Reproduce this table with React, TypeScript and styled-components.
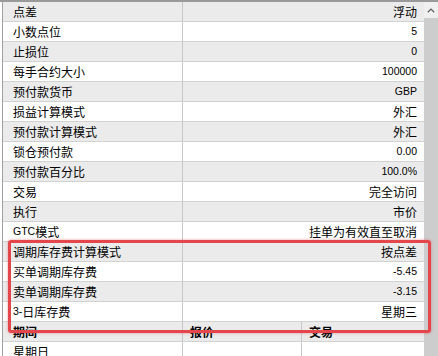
import styled, { createGlobalStyle } from "styled-components";

const GlobalStyle = createGlobalStyle`
  html, body {
    margin: 0;
    padding: 0;
    background: #ffffff;
  }
  body {
    font-family: "Noto Sans CJK SC", "Liberation Sans", sans-serif;
    font-size: 12px;
    color: #000000;
  }
`;

const Window = styled.div`
  position: relative;
  width: 438px;
  height: 356px;
  overflow: hidden;
  display: flex;
  border-top: 2px solid #9a9a9a;
  box-sizing: border-box;
  background: #ffffff;
`;

const Grid = styled.div`
  flex: 1;
  margin-left: 2px;
  border-left: 1px solid #a0a0a0;
  display: flex;
  flex-direction: column;
`;

const Row = styled.div<{ $shaded?: boolean }>`
  display: grid;
  grid-template-columns: 180px 1fr;
  height: 20px;
  box-sizing: border-box;
  border-bottom: 1px solid #d2d2d2;
  background: ${(p) => (p.$shaded ? "#ebebeb" : "#ffffff")};
  flex-shrink: 0;
`;

const NameCell = styled.div`
  display: flex;
  align-items: center;
  padding-left: 10px;
  border-right: 1px solid #c8c8c8;
  white-space: nowrap;
  line-height: 19px;
`;

const ValueCell = styled.div`
  display: flex;
  align-items: center;
  justify-content: flex-end;
  padding-right: 7px;
  white-space: nowrap;
  line-height: 19px;
`;

const Latin = styled.span`
  font-family: "Liberation Sans", sans-serif;
  font-size: 10.5px;
`;

const HeadRow = styled.div<{ $head?: boolean }>`
  display: grid;
  grid-template-columns: 180px 119px 1fr;
  height: 20px;
  box-sizing: border-box;
  border-bottom: 1px solid #d2d2d2;
  background: ${(p) => (p.$head ? "#ebebeb" : "#ffffff")};
  font-weight: ${(p) => (p.$head ? 700 : 400)};
  flex-shrink: 0;
`;

const HeadCell = styled.div<{ $first?: boolean; $last?: boolean }>`
  display: flex;
  align-items: center;
  padding-left: ${(p) => (p.$first ? "10px" : "7px")};
  border-right: ${(p) => (p.$last ? "none" : "1px solid #c8c8c8")};
  white-space: nowrap;
  line-height: 19px;
`;

const Scrollbar = styled.div`
  width: 14px;
  display: flex;
  flex-direction: column;
  background: #f0f0f0;
`;

const ArrowButton = styled.div`
  height: 16px;
  display: flex;
  align-items: center;
  justify-content: center;
  background: #f0f0f0;
`;

const Thumb = styled.div`
  flex: 1;
  background: #cdcdcd;
`;

const Highlight = styled.div`
  position: absolute;
  left: 8px;
  top: 238px;
  width: 423px;
  height: 93px;
  box-sizing: border-box;
  border: 3px solid #e3474c;
  border-radius: 3px;
  box-shadow: 0 0 3px rgba(227, 71, 76, 0.55);
  pointer-events: none;
`;

type Item = { name: React.ReactNode; value: React.ReactNode };

const items: Item[] = [
  { name: "点差", value: "浮动" },
  { name: "小数点位", value: <Latin>5</Latin> },
  { name: "止损位", value: <Latin>0</Latin> },
  { name: "每手合约大小", value: <Latin>100000</Latin> },
  { name: "预付款货币", value: <Latin>GBP</Latin> },
  { name: "损益计算模式", value: "外汇" },
  { name: "预付款计算模式", value: "外汇" },
  { name: "锁仓预付款", value: <Latin>0.00</Latin> },
  { name: "预付款百分比", value: <Latin>100.0%</Latin> },
  { name: "交易", value: "完全访问" },
  { name: "执行", value: "市价" },
  {
    name: (
      <>
        <Latin>GTC</Latin>模式
      </>
    ),
    value: "挂单为有效直至取消",
  },
  { name: "调期库存费计算模式", value: "按点差" },
  { name: "买单调期库存费", value: <Latin>-5.45</Latin> },
  { name: "卖单调期库存费", value: <Latin>-3.15</Latin> },
  {
    name: (
      <>
        <Latin>3-</Latin>日库存费
      </>
    ),
    value: "星期三",
  },
];

const ChevronUp = () => (
  <svg width="8" height="5" viewBox="0 0 8 5">
    <path d="M0.8 4.3 L4 1.1 L7.2 4.3" fill="none" stroke="#606060" strokeWidth="1.3" />
  </svg>
);

const App = () => {
  return (
    <>
      <GlobalStyle />
      <Window>
        <Grid>
          {items.map((it, i) => (
            <Row key={i} $shaded={i % 2 === 0}>
              <NameCell>{it.name}</NameCell>
              <ValueCell>{it.value}</ValueCell>
            </Row>
          ))}
          <HeadRow $head>
            <HeadCell $first>期间</HeadCell>
            <HeadCell>报价</HeadCell>
            <HeadCell $last>交易</HeadCell>
          </HeadRow>
          <HeadRow>
            <HeadCell $first>星期日</HeadCell>
            <HeadCell />
            <HeadCell $last />
          </HeadRow>
        </Grid>
        <Scrollbar>
          <ArrowButton>
            <ChevronUp />
          </ArrowButton>
          <Thumb />
        </Scrollbar>
        <Highlight />
      </Window>
    </>
  );
};

export default App;
